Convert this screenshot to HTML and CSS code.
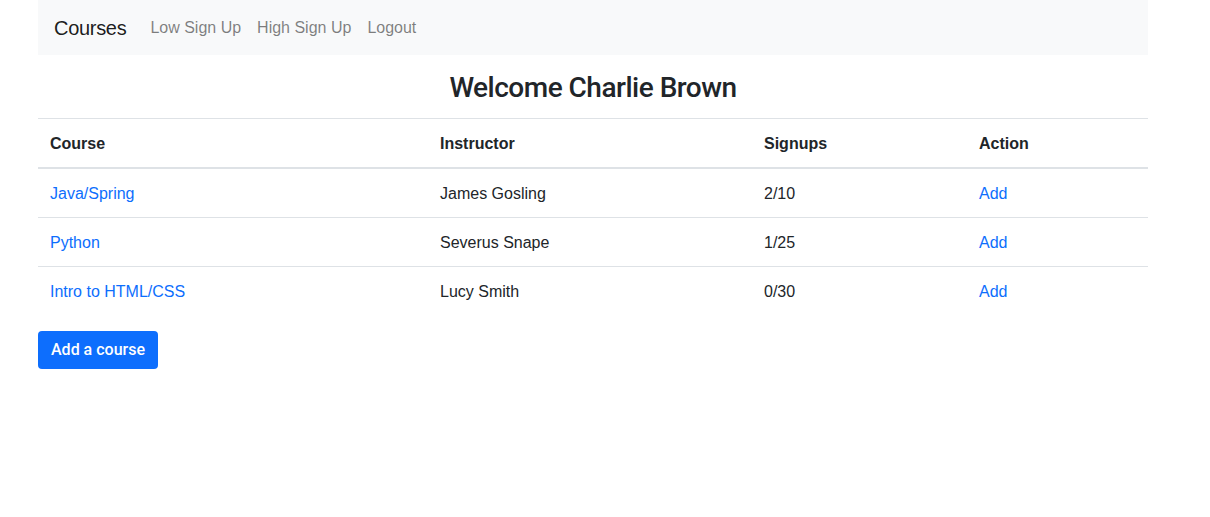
FILE: index.html
```html
<!DOCTYPE html>
<html lang="en">
<head>
<meta charset="utf-8">
<title>Courses</title>
<link rel="stylesheet" href="styles.css">
</head>
<body>
<div class="container">
  <nav class="navbar">
    <a class="brand" href="#">Courses</a>
    <div class="nav-links">
      <a href="#">Low Sign Up</a>
      <a href="#">High Sign Up</a>
      <a href="#">Logout</a>
    </div>
  </nav>
  <h3 class="welcome">Welcome Charlie Brown</h3>
  <table class="table">
    <thead>
      <tr>
        <th class="c1">Course</th>
        <th class="c2">Instructor</th>
        <th class="c3">Signups</th>
        <th class="c4">Action</th>
      </tr>
    </thead>
    <tbody>
      <tr>
        <td><a href="#">Java/Spring</a></td>
        <td>James Gosling</td>
        <td>2/10</td>
        <td><a href="#">Add</a></td>
      </tr>
      <tr>
        <td><a href="#">Python</a></td>
        <td>Severus Snape</td>
        <td>1/25</td>
        <td><a href="#">Add</a></td>
      </tr>
      <tr>
        <td><a href="#">Intro to HTML/CSS</a></td>
        <td>Lucy Smith</td>
        <td>0/30</td>
        <td><a href="#">Add</a></td>
      </tr>
    </tbody>
  </table>
  <a class="btn" href="#">Add a course</a>
</div>
</body>
</html>
```
FILE: styles.css
```css
* { box-sizing: border-box; }
html, body { margin: 0; padding: 0; }
body {
  font-family: "Liberation Sans", Arial, sans-serif;
  font-size: 16px;
  line-height: 1.5;
  color: #212529;
  background: #fff;
}
a { color: #0d6efd; text-decoration: none; }
.container {
  width: 1110px;
  margin: 0 0 0 38px;
}
.navbar {
  display: flex;
  align-items: center;
  background: #f8f9fa;
  height: 55px;
  padding: 0 16px;
}
.brand {
  font-size: 20px;
  color: rgba(0,0,0,.9);
  margin-right: 16px;
  line-height: 30px;
  letter-spacing: -0.3px;
}
.nav-links { display: flex; }
.nav-links a {
  color: rgba(0,0,0,.5);
  padding: 8px;
}
.welcome {
  text-align: center;
  font-family: Roboto, "Liberation Sans", Arial, sans-serif;
  font-size: 28px;
  font-weight: 500;
  line-height: 1.2;
  letter-spacing: -0.5px;
  margin: 16px 0 13px;
}
.table {
  width: 100%;
  border-collapse: collapse;
  margin-bottom: 16px;
}
.table th, .table td {
  padding: 13px 12px 11px;
  text-align: left;
  vertical-align: top;
  border-top: 1px solid #dee2e6;
}
.table th { font-weight: 700; }
.table thead th { border-bottom: 2px solid #dee2e6; }
.c1 { width: 390px; }
.c2 { width: 324px; }
.c3 { width: 215px; }
.c4 { width: 181px; }
.btn {
  display: inline-block;
  background: #0d6efd;
  color: #fff;
  padding: 7px 13px 5px;
  border-radius: 4px;
  line-height: 1.5;
  height: 38px;
  font-family: Roboto, "Liberation Sans", Arial, sans-serif;
  font-weight: 500;
}
```
